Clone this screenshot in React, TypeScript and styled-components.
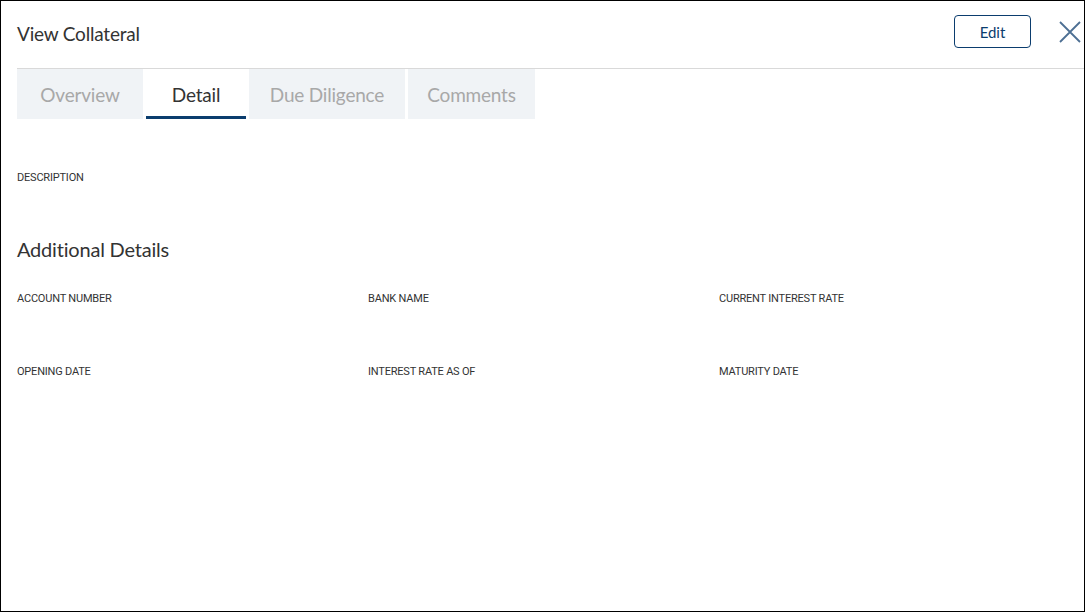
import styled, { createGlobalStyle } from "styled-components";

const GlobalStyle = createGlobalStyle`
  html, body {
    margin: 0;
    padding: 0;
    background: #ffffff;
  }
  * {
    box-sizing: border-box;
  }
`;

const Frame = styled.div`
  width: 1085px;
  height: 612px;
  border: 1px solid #000;
  background: #fff;
  display: flex;
  flex-direction: column;
  padding-left: 16px;
  font-family: Lato, "Noto Sans", sans-serif;
  color: #333;
`;

const Header = styled.div`
  display: flex;
  align-items: center;
  justify-content: space-between;
  height: 68px;
  border-bottom: 1px solid #d9d9d9;
  padding-right: 2px;
`;

const Title = styled.h1`
  margin: 0 0 2px;
  font-size: 19px;
  font-weight: 400;
  color: #333;
  letter-spacing: -0.2px;
`;

const Actions = styled.div`
  display: flex;
  align-items: center;
  gap: 27px;
  padding-bottom: 6px;
`;

const EditButton = styled.button`
  width: 77px;
  height: 33px;
  border: 1px solid #0b3d6e;
  border-radius: 4px;
  background: #fff;
  color: #0b3d6e;
  font-family: Lato, "Noto Sans", sans-serif;
  font-size: 15px;
  cursor: pointer;
`;

const CloseButton = styled.button`
  width: 24px;
  height: 24px;
  padding: 0;
  border: none;
  background: none;
  display: flex;
  align-items: center;
  justify-content: center;
  cursor: pointer;
`;

const TabBar = styled.div`
  display: flex;
  gap: 3px;
  height: 50px;
`;

const Tab = styled.div<{ $active?: boolean; $width: number }>`
  width: ${(p) => p.$width}px;
  display: flex;
  align-items: center;
  justify-content: center;
  font-size: 19px;
  letter-spacing: -0.2px;
  color: ${(p) => (p.$active ? "#333" : "#a8a8a8")};
  background: ${(p) => (p.$active ? "#fff" : "#f0f3f6")};
  border-bottom: 3px solid ${(p) => (p.$active ? "#0b3d6e" : "transparent")};
  padding-top: 4px;
`;

const Body = styled.div`
  display: flex;
  flex-direction: column;
  padding-top: 52px;
`;

const Label = styled.div`
  font-family: Roboto, "Liberation Sans", sans-serif;
  font-size: 11px;
  letter-spacing: -0.2px;
  text-transform: uppercase;
  color: #333;
  height: 14px;
  line-height: 14px;
`;

const SectionTitle = styled.h2`
  margin: 52px 0 31px;
  font-size: 20px;
  font-weight: 400;
  color: #333;
  letter-spacing: -0.2px;
`;

const Grid = styled.div`
  display: grid;
  grid-template-columns: repeat(3, 351px);
  row-gap: 59px;
`;

const tabs = [
  { name: "Overview", width: 126 },
  { name: "Detail", width: 100, active: true },
  { name: "Due Diligence", width: 156 },
  { name: "Comments", width: 127 },
];

const fields = [
  "Account Number",
  "Bank Name",
  "Current Interest Rate",
  "Opening Date",
  "Interest Rate As Of",
  "Maturity Date",
];

export default function App() {
  return (
    <>
      <GlobalStyle />
      <Frame>
        <Header>
          <Title>View Collateral</Title>
          <Actions>
            <EditButton>Edit</EditButton>
            <CloseButton aria-label="Close">
              <svg width="22" height="22" viewBox="0 0 22 22">
                <path
                  d="M1 1 L21 21 M21 1 L1 21"
                  stroke="#4d6f93"
                  strokeWidth="1.8"
                  fill="none"
                />
              </svg>
            </CloseButton>
          </Actions>
        </Header>
        <TabBar>
          {tabs.map((t) => (
            <Tab key={t.name} $active={t.active} $width={t.width}>
              {t.name}
            </Tab>
          ))}
        </TabBar>
        <Body>
          <Label>Description</Label>
          <SectionTitle>Additional Details</SectionTitle>
          <Grid>
            {fields.map((f) => (
              <Label key={f}>{f}</Label>
            ))}
          </Grid>
        </Body>
      </Frame>
    </>
  );
}
